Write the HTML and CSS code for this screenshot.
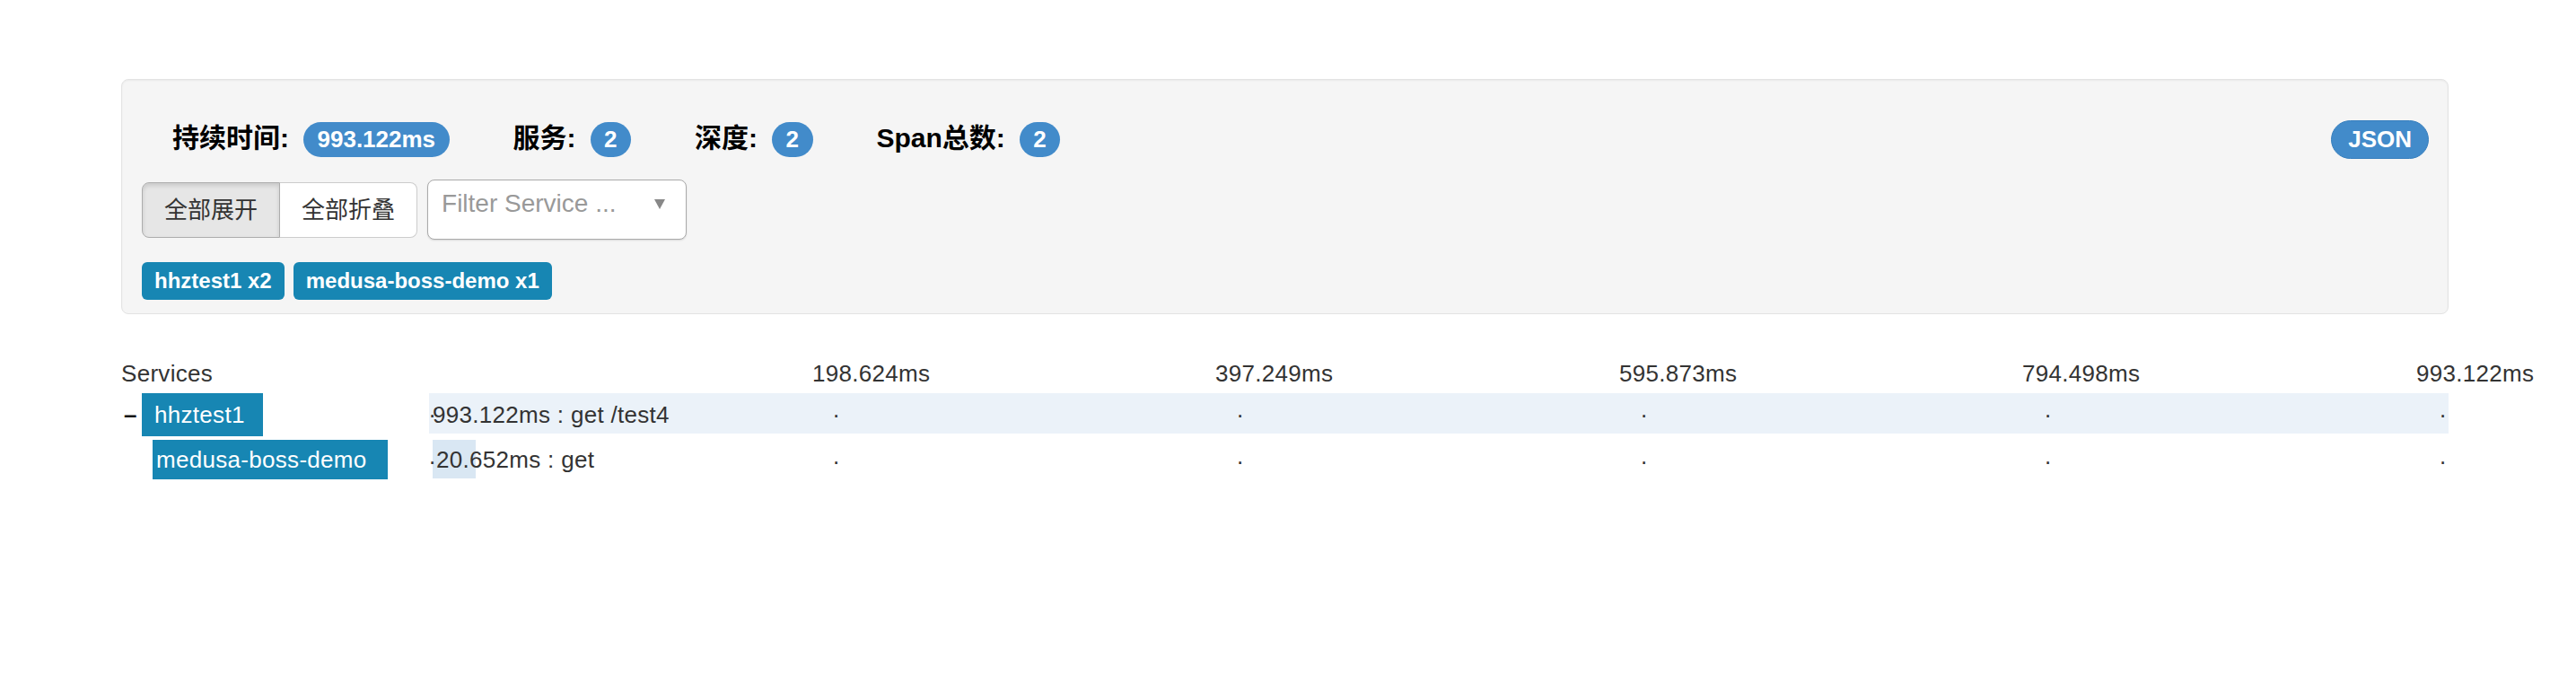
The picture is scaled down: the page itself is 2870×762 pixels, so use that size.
FILE: index.html
```html
<!DOCTYPE html>
<html lang="zh">
<head>
<meta charset="utf-8">
<title>Trace</title>
<link rel="stylesheet" href="styles.css">
</head>
<body>
<div class="page">
  <div class="well">
    <div class="summary">
      <span class="sum-label">持续时间:</span><span class="badge">993.122ms</span>
      <span class="sum-label">服务:</span><span class="badge">2</span>
      <span class="sum-label">深度:</span><span class="badge">2</span>
      <span class="sum-label">Span总数:</span><span class="badge">2</span>
      <span class="json-btn">JSON</span>
    </div>
    <div class="controls">
      <div class="btn-group">
        <button class="btn active">全部展开</button><button class="btn">全部折叠</button>
      </div>
      <div class="select">
        <span class="placeholder">Filter Service ...</span>
        <span class="arrow"></span>
      </div>
    </div>
    <div class="tags">
      <span class="tag">hhztest1 x2</span>
      <span class="tag">medusa-boss-demo x1</span>
    </div>
  </div>

  <div class="trace">
    <div class="trace-header">
      <div class="svc-col">Services</div>
      <div class="timeline">
        <span class="tick-label t1">198.624ms</span>
        <span class="tick-label t2">397.249ms</span>
        <span class="tick-label t3">595.873ms</span>
        <span class="tick-label t4">794.498ms</span>
        <span class="tick-label t5">993.122ms</span>
      </div>
    </div>

    <div class="span-row row-root">
      <div class="svc-col">
        <span class="toggle">–</span><span class="svc-name name-root">hhztest1</span>
      </div>
      <div class="timeline">
        <div class="bar bar-root"></div>
        <span class="marker m0">.</span>
        <span class="marker m1">.</span>
        <span class="marker m2">.</span>
        <span class="marker m3">.</span>
        <span class="marker m4">.</span>
        <span class="marker m5">.</span>
        <span class="span-text text-root">993.122ms : get /test4</span>
      </div>
    </div>

    <div class="span-row row-child">
      <div class="svc-col">
        <span class="svc-name name-child">medusa-boss-demo</span>
      </div>
      <div class="timeline">
        <div class="bar bar-child"></div>
        <span class="marker m0">.</span>
        <span class="marker m1">.</span>
        <span class="marker m2">.</span>
        <span class="marker m3">.</span>
        <span class="marker m4">.</span>
        <span class="marker m5">.</span>
        <span class="span-text text-child">20.652ms : get</span>
      </div>
    </div>
  </div>
</div>
</body>
</html>
```

FILE: styles.css
```css
* { box-sizing: border-box; }

html, body {
  margin: 0;
  padding: 0;
  background: #fff;
}

body {
  font-family: "Liberation Sans", "Noto Sans CJK SC", sans-serif;
  font-size: 26px;
  color: #333;
}

.page {
  padding: 88px 142px 0 135px;
}

/* ---------- summary well ---------- */
.well {
  background: #f5f5f5;
  border: 1px solid #e3e3e3;
  border-radius: 8px;
  box-shadow: inset 0 1px 2px rgba(0, 0, 0, 0.05);
  padding: 45px 21px 15px 22px;
}

.summary {
  display: flex;
  align-items: baseline;
  padding-left: 34px;
}

.sum-label {
  font-weight: bold;
  font-size: 30px;
  line-height: 30px;
  color: #000;
  margin-right: 16px;
}

.badge {
  display: inline-block;
  background: #428bca;
  color: #fff;
  font-weight: bold;
  font-size: 26px;
  line-height: 27px;
  padding: 6px 15.5px;
  border-radius: 20px;
  margin-right: 71px;
}

.json-btn {
  margin-left: auto;
  display: inline-block;
  background: #428bca;
  border: 1px solid #357ebd;
  color: #fff;
  font-weight: bold;
  font-size: 26px;
  line-height: 29px;
  padding: 6px 18px;
  border-radius: 22px;
}

.controls {
  display: flex;
  align-items: center;
  margin-top: 23px;
}

.btn-group {
  display: flex;
}

.btn {
  font-family: "Liberation Sans", "Noto Sans CJK SC", sans-serif;
  font-size: 26px;
  line-height: 36px;
  color: #333;
  background: #fff;
  border: 1px solid #ccc;
  padding: 12px 24px;
  margin: 0;
  height: 62px;
}

.btn:first-child {
  border-radius: 8px 0 0 8px;
}

.btn:last-child {
  border-radius: 0 8px 8px 0;
  border-left: none;
}

.btn.active {
  background: #e6e6e6;
  border-color: #adadad;
  box-shadow: inset 0 3px 5px rgba(0, 0, 0, 0.125);
}

.select {
  display: flex;
  align-items: flex-start;
  width: 289px;
  height: 67px;
  margin-left: 11px;
  background: #fff;
  border: 1px solid #aaa;
  border-radius: 8px;
  box-shadow: 0 1px 2px rgba(0, 0, 0, 0.12);
  padding: 10px 23px 0 15px;
}

.placeholder {
  font-size: 28px;
  line-height: 32px;
  color: #999;
  white-space: nowrap;
}

.arrow {
  margin-left: auto;
  margin-top: 11px;
  width: 0;
  height: 0;
  border-left: 6px solid transparent;
  border-right: 6px solid transparent;
  border-top: 11px solid #888;
}

.tags {
  display: flex;
  gap: 10px;
  margin-top: 25px;
}

.tag {
  display: inline-block;
  background: #1786b3;
  color: #fff;
  font-weight: bold;
  font-size: 24px;
  line-height: 28px;
  padding: 7px 14px;
  border-radius: 6px;
}

/* ---------- trace timeline ---------- */
.trace {
  margin-top: 48px;
  letter-spacing: 0.3px;
}

.trace-header,
.span-row {
  display: grid;
  grid-template-columns: 343px 1fr;
}

.trace-header {
  line-height: 37px;
  height: 37px;
}

.timeline {
  position: relative;
}

.tick-label {
  position: absolute;
  top: 0;
  white-space: nowrap;
}

.t1 { left: calc(20% - 23px); }
.t2 { left: calc(40% - 24px); }
.t3 { left: calc(60% - 24px); }
.t4 { left: calc(80% - 25px); }
.t5 { left: calc(100% - 36px); }

.span-row.row-root {
  margin-top: 3px;
  height: 48px;
  line-height: 48px;
}

.span-row.row-child {
  margin-top: 4px;
  height: 44px;
  line-height: 44px;
}

.svc-col {
  display: flex;
  white-space: nowrap;
}

.toggle {
  width: 23px;
  padding-left: 3px;
  font-weight: bold;
  color: #111;
}

.svc-name {
  display: inline-block;
  background: #1786b3;
  color: #fff;
}

.name-root {
  height: 48px;
  padding: 0 20px 0 14px;
}

.name-child {
  height: 44px;
  margin-left: 35px;
  padding: 0 23px 0 4px;
}

.bar {
  position: absolute;
  top: 0;
}

.bar-root {
  left: 0;
  width: 100%;
  height: 45px;
  background: #ebf2f9;
}

.bar-child {
  left: 4px;
  width: 48px;
  height: 43px;
  background: #d9e7f3;
}

.marker {
  position: absolute;
  top: 5px;
  font-size: 26px;
  line-height: 26px;
  color: #333;
}

.m0 { left: 0; }
.m1 { left: 20%; }
.m2 { left: 40%; }
.m3 { left: 60%; }
.m4 { left: 80%; }
.m5 { left: calc(100% - 10px); }

.span-text {
  position: absolute;
  top: 0;
  white-space: nowrap;
}

.text-root { left: 4px; }
.text-child { left: 8px; }
```
